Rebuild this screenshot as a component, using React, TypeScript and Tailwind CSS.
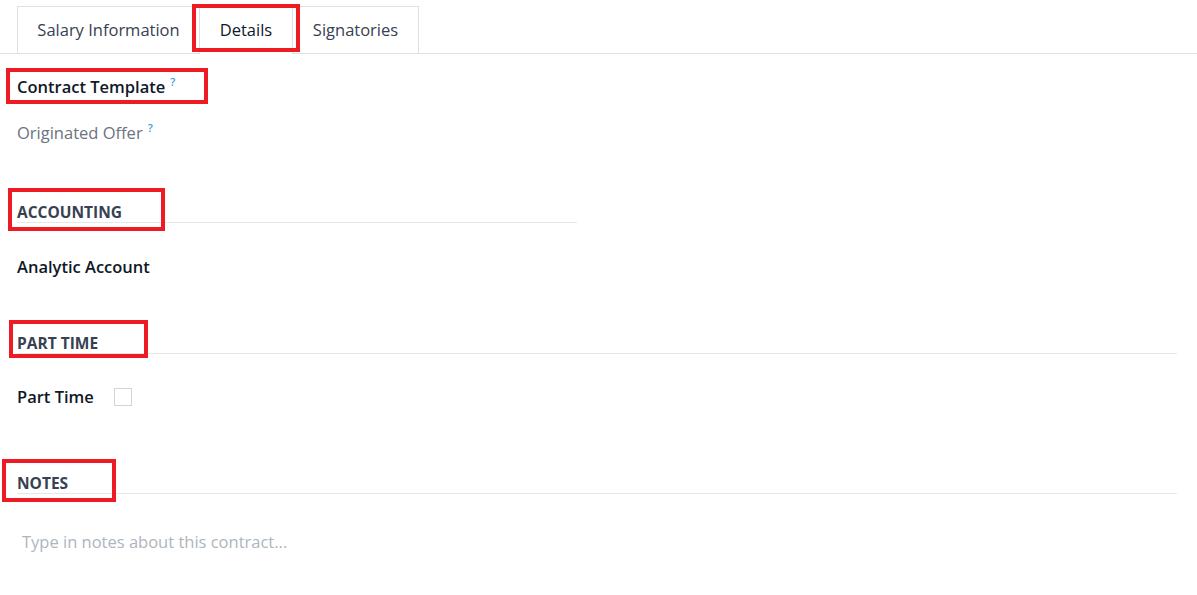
import { clsx } from 'clsx'

const font = { fontFamily: '"Open Sans", "Noto Sans", sans-serif' }

interface TabProps {
  label: string
  active?: boolean
  className?: string
}

function Tab(props: TabProps): React.JSX.Element {
  const { label, active, className } = props
  return (
    <button
      type="button"
      className={clsx(
        'flex h-[47px] items-center justify-center whitespace-nowrap border-t border-[#dee2e6] text-[16.5px]',
        active
          ? '-mb-px h-[48px] bg-white text-[#111827]'
          : 'text-[#374151]',
        className
      )}
    >
      {label}
    </button>
  )
}

function SectionHeader(props: {
  title: string
  className?: string
}): React.JSX.Element {
  const { title, className } = props
  return (
    <div
      className={clsx(
        'border-b border-[#e5e7eb] text-[15.5px] font-bold leading-[20px] text-[#374151]',
        className
      )}
    >
      {title}
    </div>
  )
}

function Help(): React.JSX.Element {
  return (
    <span className="relative -top-[7px] ml-[5px] text-[11px] font-semibold leading-none text-[#3d9ad8]">
      ?
    </span>
  )
}

// red annotation frame drawn over the screenshot
function Highlight(props: { className: string }): React.JSX.Element {
  return (
    <div
      className={clsx(
        'pointer-events-none absolute border-[4px] border-[#ed1c24]',
        props.className
      )}
    />
  )
}

export default function App(): React.JSX.Element {
  return (
    <div className="relative h-[595px] w-[1197px] bg-white" style={font}>
      <div className="flex border-b border-[#dee2e6] pl-[17px] pt-[6px]">
        <Tab label="Salary Information" className="w-[182px] border-l" />
        <Tab label="Details" active className="w-[93px] border-l" />
        <Tab label="Signatories" className="w-[127px] border-x" />
      </div>

      <div className="flex flex-col pl-[17px] pr-[20px]">
        <div className="mt-[20px] text-[16.5px] font-semibold leading-[26px] text-[#111827]">
          Contract Template
          <Help />
        </div>
        <div className="mt-[20px] text-[16.5px] leading-[26px] text-[#6b7280]">
          Originated Offer
          <Help />
        </div>

        <SectionHeader title="ACCOUNTING" className="mt-[56px] w-[560px]" />
        <div className="mt-[31px] text-[16.5px] font-semibold leading-[26px] text-[#111827]">
          Analytic Account
        </div>

        <SectionHeader title="PART TIME" className="mt-[53px]" />
        <div className="mt-[30px] flex items-center gap-[20px] text-[16.5px] font-semibold leading-[26px] text-[#111827]">
          Part Time
          <span className="size-[18px] border border-[#d1d5db] bg-white" />
        </div>

        <SectionHeader title="NOTES" className="mt-[63px]" />
        <div className="mt-[35px] pl-[5px] text-[16.5px] leading-[26px] text-[#adb5bd]">
          Type in notes about this contract...
        </div>
      </div>

      <Highlight className="left-[192px] top-[4px] h-[48px] w-[108px]" />
      <Highlight className="left-[6px] top-[68px] h-[36px] w-[202px]" />
      <Highlight className="left-[8px] top-[188px] h-[43px] w-[157px]" />
      <Highlight className="left-[9px] top-[320px] h-[38px] w-[139px]" />
      <Highlight className="left-[2px] top-[459px] h-[43px] w-[114px]" />
    </div>
  )
}
